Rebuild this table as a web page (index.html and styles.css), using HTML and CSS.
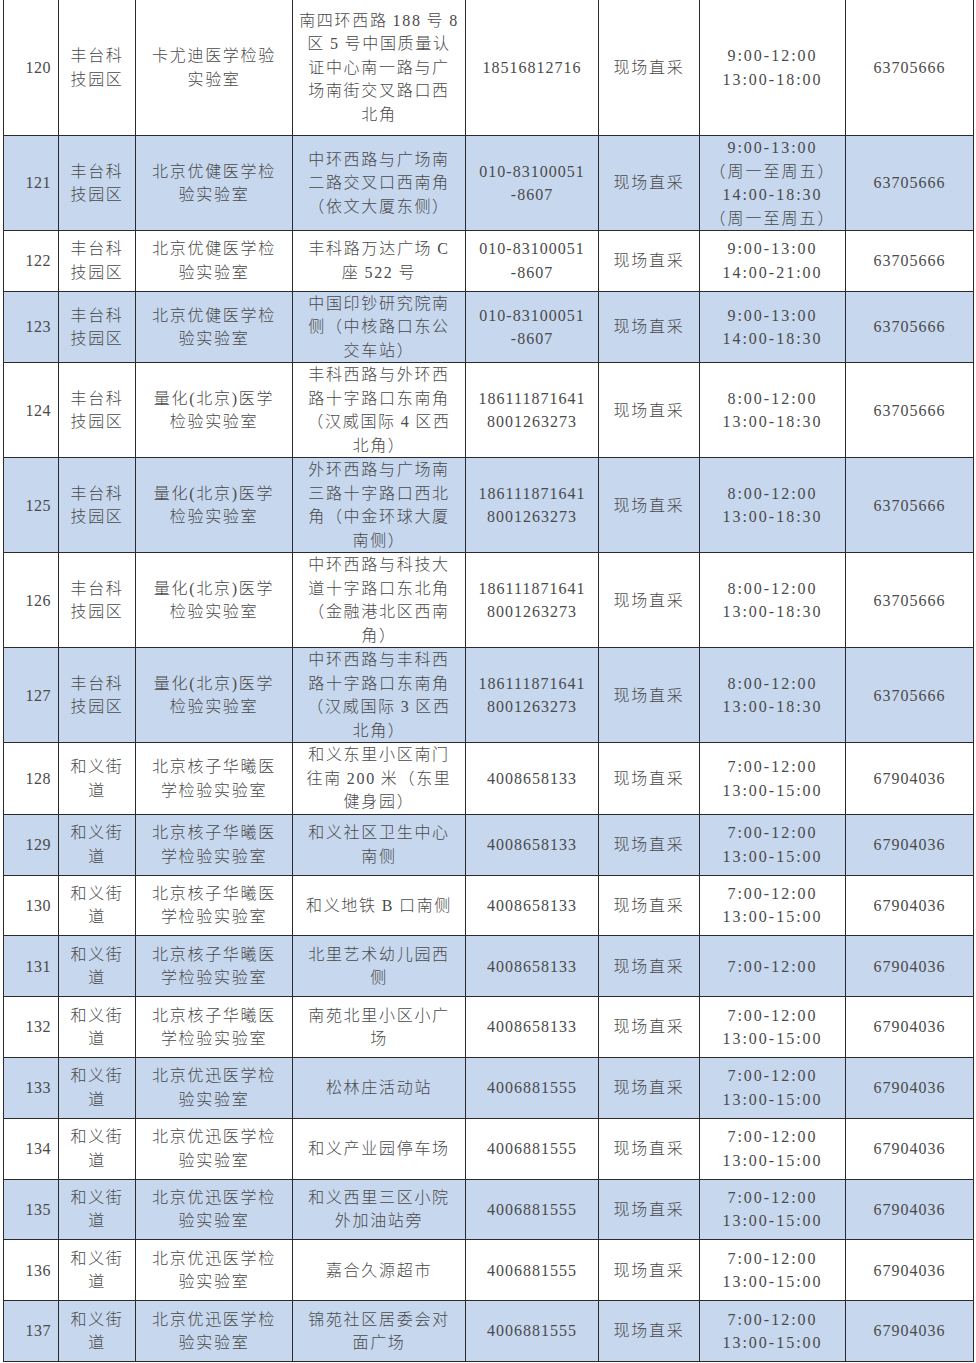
FILE: index.html
```html
<!DOCTYPE html>
<html lang="zh-CN">
<head>
<meta charset="utf-8">
<title>核酸检测采样点</title>
<link rel="stylesheet" href="styles.css">
</head>
<body>
<table class="sites">
<colgroup>
<col class="c-no"><col class="c-area"><col class="c-lab"><col class="c-addr"><col class="c-phone"><col class="c-mode"><col class="c-time"><col class="c-tel">
</colgroup>
<tbody>
<tr class="tall">
<td class="no">120</td><td>丰台科<br>技园区</td><td>卡尤迪医学检验<br>实验室</td><td>南四环西路&#8201;188&#8201;号&#8201;8<br>区&#8201;5&#8201;号中国质量认<br>证中心南一路与广<br>场南街交叉路口西<br>北角</td><td class="ph">18516812716</td><td>现场直采</td><td class="tm">9:00-12:00<br>13:00-18:00</td><td class="ph">63705666</td>
</tr>
<tr class="alt">
<td class="no">121</td><td>丰台科<br>技园区</td><td>北京优健医学检<br>验实验室</td><td>中环西路与广场南<br>二路交叉口西南角<br>（依文大厦东侧）</td><td class="ph">010-83100051<br>-8607</td><td>现场直采</td><td class="tm">9:00-13:00<br>（周一至周五）<br>14:00-18:30<br>（周一至周五）</td><td class="ph">63705666</td>
</tr>
<tr>
<td class="no">122</td><td>丰台科<br>技园区</td><td>北京优健医学检<br>验实验室</td><td>丰科路万达广场&#8201;C<br>座&#8201;522&#8201;号</td><td class="ph">010-83100051<br>-8607</td><td>现场直采</td><td class="tm">9:00-13:00<br>14:00-21:00</td><td class="ph">63705666</td>
</tr>
<tr class="alt">
<td class="no">123</td><td>丰台科<br>技园区</td><td>北京优健医学检<br>验实验室</td><td>中国印钞研究院南<br>侧（中核路口东公<br>交车站）</td><td class="ph">010-83100051<br>-8607</td><td>现场直采</td><td class="tm">9:00-13:00<br>14:00-18:30</td><td class="ph">63705666</td>
</tr>
<tr>
<td class="no">124</td><td>丰台科<br>技园区</td><td>量化(北京)医学<br>检验实验室</td><td>丰科西路与外环西<br>路十字路口东南角<br>（汉威国际&#8201;4&#8201;区西<br>北角）</td><td class="ph">186111871641<br>8001263273</td><td>现场直采</td><td class="tm">8:00-12:00<br>13:00-18:30</td><td class="ph">63705666</td>
</tr>
<tr class="alt">
<td class="no">125</td><td>丰台科<br>技园区</td><td>量化(北京)医学<br>检验实验室</td><td>外环西路与广场南<br>三路十字路口西北<br>角（中金环球大厦<br>南侧）</td><td class="ph">186111871641<br>8001263273</td><td>现场直采</td><td class="tm">8:00-12:00<br>13:00-18:30</td><td class="ph">63705666</td>
</tr>
<tr>
<td class="no">126</td><td>丰台科<br>技园区</td><td>量化(北京)医学<br>检验实验室</td><td>中环西路与科技大<br>道十字路口东北角<br>（金融港北区西南<br>角）</td><td class="ph">186111871641<br>8001263273</td><td>现场直采</td><td class="tm">8:00-12:00<br>13:00-18:30</td><td class="ph">63705666</td>
</tr>
<tr class="alt">
<td class="no">127</td><td>丰台科<br>技园区</td><td>量化(北京)医学<br>检验实验室</td><td>中环西路与丰科西<br>路十字路口东南角<br>（汉威国际&#8201;3&#8201;区西<br>北角）</td><td class="ph">186111871641<br>8001263273</td><td>现场直采</td><td class="tm">8:00-12:00<br>13:00-18:30</td><td class="ph">63705666</td>
</tr>
<tr>
<td class="no">128</td><td>和义街<br>道</td><td>北京核子华曦医<br>学检验实验室</td><td>和义东里小区南门<br>往南&#8201;200&#8201;米（东里<br>健身园）</td><td class="ph">4008658133</td><td>现场直采</td><td class="tm">7:00-12:00<br>13:00-15:00</td><td class="ph">67904036</td>
</tr>
<tr class="alt">
<td class="no">129</td><td>和义街<br>道</td><td>北京核子华曦医<br>学检验实验室</td><td>和义社区卫生中心<br>南侧</td><td class="ph">4008658133</td><td>现场直采</td><td class="tm">7:00-12:00<br>13:00-15:00</td><td class="ph">67904036</td>
</tr>
<tr>
<td class="no">130</td><td>和义街<br>道</td><td>北京核子华曦医<br>学检验实验室</td><td>和义地铁&#8201;B&#8201;口南侧</td><td class="ph">4008658133</td><td>现场直采</td><td class="tm">7:00-12:00<br>13:00-15:00</td><td class="ph">67904036</td>
</tr>
<tr class="alt">
<td class="no">131</td><td>和义街<br>道</td><td>北京核子华曦医<br>学检验实验室</td><td>北里艺术幼儿园西<br>侧</td><td class="ph">4008658133</td><td>现场直采</td><td class="tm">7:00-12:00</td><td class="ph">67904036</td>
</tr>
<tr>
<td class="no">132</td><td>和义街<br>道</td><td>北京核子华曦医<br>学检验实验室</td><td>南苑北里小区小广<br>场</td><td class="ph">4008658133</td><td>现场直采</td><td class="tm">7:00-12:00<br>13:00-15:00</td><td class="ph">67904036</td>
</tr>
<tr class="alt">
<td class="no">133</td><td>和义街<br>道</td><td>北京优迅医学检<br>验实验室</td><td>松林庄活动站</td><td class="ph">4006881555</td><td>现场直采</td><td class="tm">7:00-12:00<br>13:00-15:00</td><td class="ph">67904036</td>
</tr>
<tr>
<td class="no">134</td><td>和义街<br>道</td><td>北京优迅医学检<br>验实验室</td><td>和义产业园停车场</td><td class="ph">4006881555</td><td>现场直采</td><td class="tm">7:00-12:00<br>13:00-15:00</td><td class="ph">67904036</td>
</tr>
<tr class="alt">
<td class="no">135</td><td>和义街<br>道</td><td>北京优迅医学检<br>验实验室</td><td>和义西里三区小院<br>外加油站旁</td><td class="ph">4006881555</td><td>现场直采</td><td class="tm">7:00-12:00<br>13:00-15:00</td><td class="ph">67904036</td>
</tr>
<tr>
<td class="no">136</td><td>和义街<br>道</td><td>北京优迅医学检<br>验实验室</td><td>嘉合久源超市</td><td class="ph">4006881555</td><td>现场直采</td><td class="tm">7:00-12:00<br>13:00-15:00</td><td class="ph">67904036</td>
</tr>
<tr class="alt">
<td class="no">137</td><td>和义街<br>道</td><td>北京优迅医学检<br>验实验室</td><td>锦苑社区居委会对<br>面广场</td><td class="ph">4006881555</td><td>现场直采</td><td class="tm">7:00-12:00<br>13:00-15:00</td><td class="ph">67904036</td>
</tr>
</tbody>
</table>
</body>
</html>
```

FILE: styles.css
```css
html, body {
  margin: 0;
  padding: 0;
  background: #ffffff;
}

body {
  font-family: "Liberation Serif", "Noto Sans CJK SC", serif;
  font-size: 16px;
  color: #4a4a4a;
}

.sites {
  border-collapse: collapse;
  table-layout: fixed;
  width: 970px;
  margin: -1px 0 0 3px;
}

.c-no { width: 55px; }
.c-area { width: 77px; }
.c-lab { width: 157px; }
.c-addr { width: 173px; }
.c-phone { width: 133px; }
.c-mode { width: 101px; }
.c-time { width: 146px; }
.c-tel { width: 128px; }

.sites td {
  border: 1px solid #2b2b2b;
  height: 59.8px;
  padding: 0;
  text-align: center;
  vertical-align: middle;
  line-height: 23.5px;
  letter-spacing: 1.7px;
  font-weight: 300;
  white-space: nowrap;
}

.sites tr.tall td {
  height: 135px;
}

.sites tr.alt td {
  background: #c6d7ee;
}

.sites td.no {
  text-align: right;
  padding-right: 7px;
  letter-spacing: 0.5px;
}

.sites td.ph {
  letter-spacing: 1px;
}

.sites td.tm {
  letter-spacing: 2px;
}
```
